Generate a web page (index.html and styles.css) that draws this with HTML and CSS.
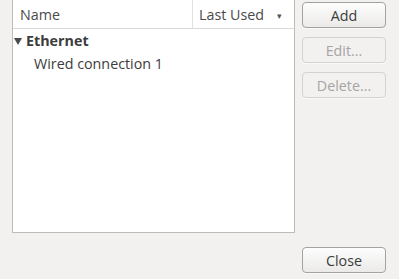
FILE: index.html
```html
<!DOCTYPE html>
<html>
<head>
<meta charset="utf-8">
<link rel="stylesheet" href="styles.css">
</head>
<body>
<div class="dialog">
  <div class="top">
    <div class="list">
      <div class="header">
        <div class="col col-name">Name</div>
        <div class="col col-used">Last Used <span class="sort">&#9662;</span></div>
      </div>
      <div class="row group"><span class="expander"></span>Ethernet</div>
      <div class="row child">Wired connection 1</div>
    </div>
    <div class="buttons">
      <button class="btn">Add</button>
      <button class="btn" disabled>Edit...</button>
      <button class="btn" disabled>Delete...</button>
    </div>
  </div>
  <div class="bottom">
    <button class="btn">Close</button>
  </div>
</div>
</body>
</html>
```
FILE: styles.css
```css
html, body {
  margin: 0;
  padding: 0;
  background: #f2f1f0;
}
body {
  font-family: "Open Sans", "DejaVu Sans", sans-serif;
  font-size: 14.3px;
  color: #3c3c3c;
}
.dialog {
  width: 399px;
  height: 279px;
  display: flex;
  flex-direction: column;
}
.top {
  display: flex;
  gap: 7px;
  padding-left: 12px;
}
.list {
  width: 281px;
  height: 232px;
  background: #fff;
  border: 1px solid #bdbcba;
  border-top: none;
}
.header {
  display: flex;
  height: 28px;
  border-bottom: 1px solid #dcdbd9;
  color: #4a4a4a;
}
.col {
  display: flex;
  align-items: center;
  box-sizing: border-box;
}
.col-name {
  width: 180px;
  padding-left: 7px;
  border-right: 1px solid #e2e1df;
}
.col-used {
  flex: 1;
  padding-left: 6px;
}
.sort {
  font-size: 9px;
  margin-left: 13px;
  color: #555;
  padding-top: 2px;
}
.row {
  height: 23px;
  display: flex;
  align-items: center;
}
.group {
  font-weight: bold;
  padding-left: 1px;
}
.expander {
  width: 0;
  height: 0;
  border-left: 4px solid transparent;
  border-right: 4px solid transparent;
  border-top: 7px solid #4a4a4a;
  margin-right: 4px;
  margin-top: 1px;
}
.child {
  padding-left: 21px;
}
.buttons {
  display: flex;
  flex-direction: column;
  gap: 9px;
  padding-top: 2px;
}
.btn {
  width: 84px;
  height: 26px;
  font-family: inherit;
  font-size: 14.3px;
  color: #3c3c3c;
  border: 1px solid #a3a2a0;
  border-radius: 4px;
  background: linear-gradient(#fdfdfd, #ebeae9);
  padding: 0;
  box-shadow: 0 1px 0 rgba(255,255,255,0.6);
}
.btn:disabled {
  color: #a6a5a3;
  border-color: #d3d2d0;
  background: #f2f1f0;
}
.bottom {
  display: flex;
  justify-content: flex-end;
  padding-top: 14px;
  padding-right: 13px;
}
```
